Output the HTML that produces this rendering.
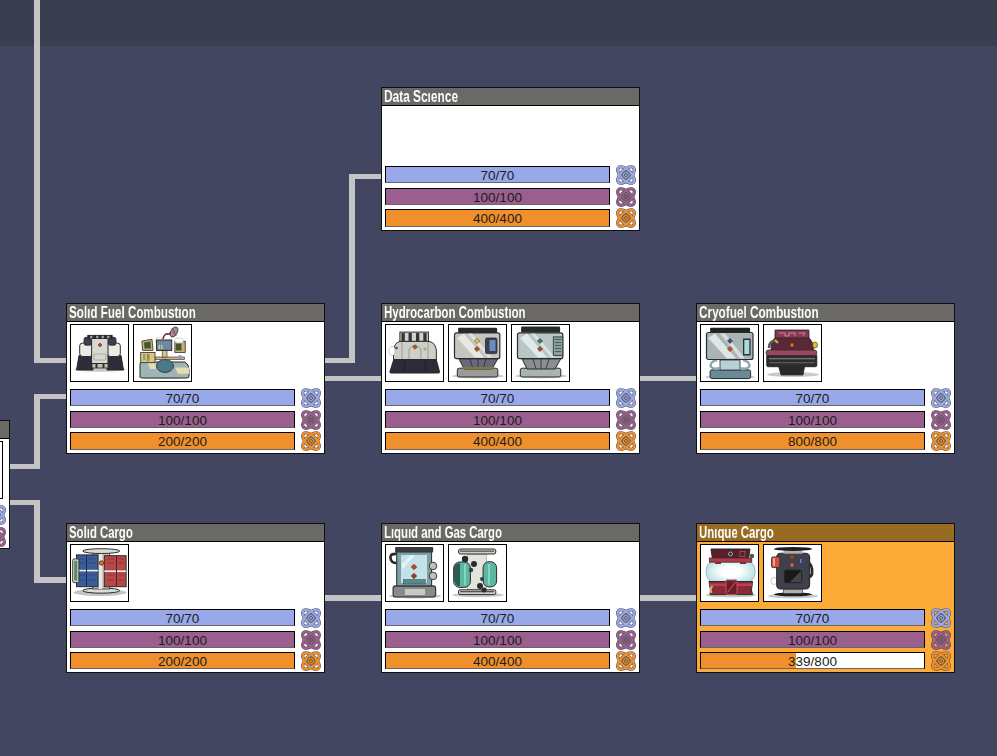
<!DOCTYPE html>
<html><head><meta charset="utf-8"><style>
*{box-sizing:border-box}
html,body{margin:0;padding:0;width:997px;height:756px;overflow:hidden;background:#424660;font-family:"Liberation Sans",sans-serif}
.topband{position:absolute;left:0;top:0;width:997px;height:46px;background:#3a3f50}
.ln{position:absolute;background:#c4c4c4}
.card{position:absolute;width:259px;background:#fff;border:1px solid #101010}
.card .hd{position:absolute;left:0;top:0;width:257px;height:18px;background:#6a6965;border-bottom:1px solid #000}
.card.uq{background:#fcaa38}
.card.uq .hd{background:#986b22}
.tt{position:absolute;left:2px;top:0px;height:17px;line-height:17px;font-size:17px;font-weight:bold;color:#fff;white-space:nowrap;transform-origin:0 0;will-change:transform}
.th{position:absolute;top:20px;width:59px;height:58px;border:1px solid #000;background:#fff;overflow:hidden}
.bar{position:absolute;left:3px;width:225px;height:17px;border:1px solid #000;border-bottom-color:#666;overflow:hidden}
.bar i{position:absolute;left:0;top:0;bottom:0}
.bar span{position:absolute;left:0;right:0;top:0;text-align:center;font-size:13.5px;line-height:17px;color:#1c1c1c}
.ic{position:absolute}
</style></head><body>
<div class="topband"></div>
<div class="ln" style="left:34px;top:0px;width:6px;height:363px"></div><div class="ln" style="left:34px;top:358px;width:33px;height:5px"></div><div class="ln" style="left:9px;top:464px;width:31px;height:5px"></div><div class="ln" style="left:34px;top:394px;width:6px;height:75px"></div><div class="ln" style="left:34px;top:394px;width:33px;height:5px"></div><div class="ln" style="left:9px;top:500px;width:31px;height:5px"></div><div class="ln" style="left:34px;top:500px;width:6px;height:83px"></div><div class="ln" style="left:34px;top:577px;width:33px;height:6px"></div><div class="ln" style="left:349px;top:174px;width:33px;height:5px"></div><div class="ln" style="left:349px;top:174px;width:6px;height:189px"></div><div class="ln" style="left:324px;top:358px;width:31px;height:5px"></div><div class="ln" style="left:324px;top:376px;width:58px;height:5px"></div><div class="ln" style="left:639px;top:376px;width:58px;height:5px"></div><div class="ln" style="left:324px;top:595px;width:58px;height:6px"></div><div class="ln" style="left:639px;top:595px;width:58px;height:6px"></div>
<div class="card" style="left:-249px;top:420px;height:129px"><div class="hd"></div><div class="tt" style="transform:scaleX(0.68)"></div><div class="th" style="left:3px"></div><div class="th" style="left:66px"></div><div class="th" style="left:129px"></div><div class="th" style="left:192px"></div><div class="bar" style="top:85px;height:17px;background:#98a8e8"><span>70/70</span></div><svg class="ic" style="left:234px;top:84px" width="20" height="20" viewBox="0.2 0.2 19.6 19.6">
<g fill="none" stroke="#474747" stroke-width="3.1"><ellipse cx="10" cy="10" rx="10.3" ry="5.0" transform="rotate(45 10 10)"/><ellipse cx="10" cy="10" rx="10.3" ry="5.0" transform="rotate(-45 10 10)"/></g>
<g fill="none" stroke="#98a8e8" stroke-width="2.15"><ellipse cx="10" cy="10" rx="10.3" ry="5.0" transform="rotate(45 10 10)"/><ellipse cx="10" cy="10" rx="10.3" ry="5.0" transform="rotate(-45 10 10)"/></g>
<circle cx="10" cy="10" r="3.5" fill="#98a8e8" stroke="#474747" stroke-width="0.75"/>
<circle cx="10" cy="10" r="1.5" fill="#98a8e8" stroke="#474747" stroke-width="0.75"/>
</svg><div class="bar" style="top:107px;height:17px;background:#9a5f8e"><span>100/100</span></div><svg class="ic" style="left:234px;top:106px" width="20" height="20" viewBox="0.2 0.2 19.6 19.6">
<g fill="none" stroke="#474747" stroke-width="3.1"><ellipse cx="10" cy="10" rx="10.3" ry="5.0" transform="rotate(45 10 10)"/><ellipse cx="10" cy="10" rx="10.3" ry="5.0" transform="rotate(-45 10 10)"/></g>
<g fill="none" stroke="#9a5f8e" stroke-width="2.15"><ellipse cx="10" cy="10" rx="10.3" ry="5.0" transform="rotate(45 10 10)"/><ellipse cx="10" cy="10" rx="10.3" ry="5.0" transform="rotate(-45 10 10)"/></g>
<circle cx="10" cy="10" r="3.5" fill="#9a5f8e" stroke="#474747" stroke-width="0.75"/>
<circle cx="10" cy="10" r="1.5" fill="#9a5f8e" stroke="#474747" stroke-width="0.75"/>
</svg></div><div class="card" style="left:381px;top:87px;height:144px"><div class="hd"></div><div class="tt" style="transform:scaleX(0.699)">Data Scıence</div><div class="bar" style="top:78px;height:17px;background:#98a8e8"><span>70/70</span></div><svg class="ic" style="left:234px;top:77px" width="20" height="20" viewBox="0.2 0.2 19.6 19.6">
<g fill="none" stroke="#474747" stroke-width="3.1"><ellipse cx="10" cy="10" rx="10.3" ry="5.0" transform="rotate(45 10 10)"/><ellipse cx="10" cy="10" rx="10.3" ry="5.0" transform="rotate(-45 10 10)"/></g>
<g fill="none" stroke="#98a8e8" stroke-width="2.15"><ellipse cx="10" cy="10" rx="10.3" ry="5.0" transform="rotate(45 10 10)"/><ellipse cx="10" cy="10" rx="10.3" ry="5.0" transform="rotate(-45 10 10)"/></g>
<circle cx="10" cy="10" r="3.5" fill="#98a8e8" stroke="#474747" stroke-width="0.75"/>
<circle cx="10" cy="10" r="1.5" fill="#98a8e8" stroke="#474747" stroke-width="0.75"/>
</svg><div class="bar" style="top:100px;height:17px;background:#9a5f8e"><span>100/100</span></div><svg class="ic" style="left:234px;top:99px" width="20" height="20" viewBox="0.2 0.2 19.6 19.6">
<g fill="none" stroke="#474747" stroke-width="3.1"><ellipse cx="10" cy="10" rx="10.3" ry="5.0" transform="rotate(45 10 10)"/><ellipse cx="10" cy="10" rx="10.3" ry="5.0" transform="rotate(-45 10 10)"/></g>
<g fill="none" stroke="#9a5f8e" stroke-width="2.15"><ellipse cx="10" cy="10" rx="10.3" ry="5.0" transform="rotate(45 10 10)"/><ellipse cx="10" cy="10" rx="10.3" ry="5.0" transform="rotate(-45 10 10)"/></g>
<circle cx="10" cy="10" r="3.5" fill="#9a5f8e" stroke="#474747" stroke-width="0.75"/>
<circle cx="10" cy="10" r="1.5" fill="#9a5f8e" stroke="#474747" stroke-width="0.75"/>
</svg><div class="bar" style="top:121px;height:18px;background:#f0902c"><span>400/400</span></div><svg class="ic" style="left:234px;top:120px" width="20" height="20" viewBox="0.2 0.2 19.6 19.6">
<g fill="none" stroke="#474747" stroke-width="3.1"><ellipse cx="10" cy="10" rx="10.3" ry="5.0" transform="rotate(45 10 10)"/><ellipse cx="10" cy="10" rx="10.3" ry="5.0" transform="rotate(-45 10 10)"/></g>
<g fill="none" stroke="#f0902c" stroke-width="2.15"><ellipse cx="10" cy="10" rx="10.3" ry="5.0" transform="rotate(45 10 10)"/><ellipse cx="10" cy="10" rx="10.3" ry="5.0" transform="rotate(-45 10 10)"/></g>
<circle cx="10" cy="10" r="3.5" fill="#f0902c" stroke="#474747" stroke-width="0.75"/>
<circle cx="10" cy="10" r="1.5" fill="#f0902c" stroke="#474747" stroke-width="0.75"/>
</svg></div><div class="card" style="left:66px;top:303px;height:151px"><div class="hd"></div><div class="tt" style="transform:scaleX(0.685)">Solıd Fuel Combustıon</div><div class="th" style="left:3px"><svg width="57" height="56" viewBox="1 1 57 56" style="position:absolute;left:0;top:0"><ellipse cx="30" cy="45.5" rx="26" ry="2.2" fill="#c9c9c9"/><path d="M9 31.5 L23 31.5 L23 46 L6.5 46 Z" fill="#2c2d3a" stroke="#2b2b2b" stroke-width="1"/><path d="M37 31.5 L51 31.5 L53.5 46 L37 46 Z" fill="#2c2d3a" stroke="#2b2b2b" stroke-width="1"/><rect x="22" y="38" width="16" height="6" fill="#bdbdb6" stroke="#2b2b2b" stroke-width="0.8"/><rect x="25.5" y="38" width="2" height="6" fill="#333"/><rect x="32.5" y="38" width="2" height="6" fill="#333"/><rect x="9.7" y="19" width="13" height="13.5" rx="3" fill="#ebebe6" stroke="#2b2b2b" stroke-width="1"/><rect x="37.3" y="19" width="13" height="13.5" rx="3" fill="#ebebe6" stroke="#2b2b2b" stroke-width="1"/><rect x="14" y="13.3" width="7.5" height="8" rx="2" fill="#3b3f50" stroke="#2b2b2b" stroke-width="0.8"/><rect x="38.5" y="13.3" width="7.5" height="8" rx="2" fill="#3b3f50" stroke="#2b2b2b" stroke-width="0.8"/><rect x="21.6" y="14.5" width="16.4" height="25" fill="#d9d7d1" stroke="#2b2b2b" stroke-width="1"/><rect x="24" y="30" width="12" height="6" rx="1" fill="none" stroke="#888" stroke-width="0.6"/><rect x="17.3" y="10.9" width="25.3" height="4" fill="#2a2a2a"/><rect x="20" y="11.8" width="2.5" height="2.4" fill="#9a9a94"/><rect x="26" y="11.8" width="2.5" height="2.4" fill="#9a9a94"/><rect x="31.5" y="11.8" width="2.5" height="2.4" fill="#9a9a94"/><rect x="37" y="11.8" width="2.5" height="2.4" fill="#9a9a94"/><path d="M30 19L32 21L30 23L28 21Z" fill="#c8401c" stroke="#3a2a20" stroke-width="0.5"/></svg></div><div class="th" style="left:66px"><svg width="57" height="56" viewBox="1 1 57 56" style="position:absolute;left:0;top:0"><ellipse cx="30" cy="53" rx="25" ry="2" fill="#c9c9c9"/><path d="M7 40 Q7 38 9 38 L52 38 Q56 40 56 46 L56 52 Q56 54 54 54 L9 54 Q7 54 7 52 Z" fill="#9fb5b5" stroke="#2b2b2b" stroke-width="1"/><path d="M14.5 38.7 L22.8 38.7 L22.8 45 L17 45 Z" fill="#e6dcb4"/><path d="M42 43.4 L56 43.4 L56 49.8 L45 49.8 Z" fill="#e6dcb4"/><ellipse cx="32" cy="42" rx="8.5" ry="6.5" fill="#4a7a88" stroke="#2b2b2b" stroke-width="0.8"/><rect x="22" y="33" width="29.4" height="2.5" fill="#cdb47a" stroke="#2b2b2b" stroke-width="0.6"/><rect x="7.7" y="28.4" width="14.3" height="10.3" fill="#d7c58a" stroke="#2b2b2b" stroke-width="0.8"/><rect x="10" y="30" width="2.5" height="6" fill="#8aaa60"/><rect x="14" y="30" width="2.5" height="6" fill="#c8704a"/><circle cx="15" cy="36" r="1.5" fill="#60c040"/><rect x="29.2" y="26.4" width="4.8" height="6.7" fill="#d9c38a" stroke="#2b2b2b" stroke-width="0.6"/><path d="M8.9 17 L19 15.3 L20 26.4 L9.5 26.4 Z" fill="#cdb070" stroke="#2b2b2b" stroke-width="0.8"/><path d="M11 18.5 L17.5 17.5 L18 24.5 L11.5 24.5 Z" fill="#3d5a2e"/><rect x="41.9" y="17.3" width="10.3" height="11.1" fill="#cdb070" stroke="#2b2b2b" stroke-width="0.8"/><rect x="43" y="19.5" width="5.5" height="7" fill="#3d5a2e"/><ellipse cx="26" cy="17" rx="4" ry="3.5" fill="#fff" stroke="#aaa" stroke-width="0.5"/><ellipse cx="46" cy="16.5" rx="4.5" ry="2.5" fill="#fff" stroke="#aaa" stroke-width="0.5"/><rect x="23.6" y="16" width="15.1" height="10.4" fill="#6f8aa0" stroke="#2b2b2b" stroke-width="1"/><rect x="25.5" y="21" width="1.5" height="4" fill="#d9c38a"/><rect x="28" y="21" width="1.5" height="4" fill="#d9c38a"/><path d="M30 15 Q31 9 36 10 Q38 8 40 8" fill="none" stroke="#7a2a30" stroke-width="1.6"/><ellipse cx="41" cy="8" rx="3.2" ry="5.5" transform="rotate(30 41 8)" fill="#8a96a4" stroke="#2b2b2b" stroke-width="0.8"/><path d="M39 4 L43 12" stroke="#b83a40" stroke-width="1.2"/><circle cx="47" cy="33" r="2" fill="#9a9ab0"/></svg></div><div class="bar" style="top:85px;height:17px;background:#98a8e8"><span>70/70</span></div><svg class="ic" style="left:234px;top:84px" width="20" height="20" viewBox="0.2 0.2 19.6 19.6">
<g fill="none" stroke="#474747" stroke-width="3.1"><ellipse cx="10" cy="10" rx="10.3" ry="5.0" transform="rotate(45 10 10)"/><ellipse cx="10" cy="10" rx="10.3" ry="5.0" transform="rotate(-45 10 10)"/></g>
<g fill="none" stroke="#98a8e8" stroke-width="2.15"><ellipse cx="10" cy="10" rx="10.3" ry="5.0" transform="rotate(45 10 10)"/><ellipse cx="10" cy="10" rx="10.3" ry="5.0" transform="rotate(-45 10 10)"/></g>
<circle cx="10" cy="10" r="3.5" fill="#98a8e8" stroke="#474747" stroke-width="0.75"/>
<circle cx="10" cy="10" r="1.5" fill="#98a8e8" stroke="#474747" stroke-width="0.75"/>
</svg><div class="bar" style="top:107px;height:17px;background:#9a5f8e"><span>100/100</span></div><svg class="ic" style="left:234px;top:106px" width="20" height="20" viewBox="0.2 0.2 19.6 19.6">
<g fill="none" stroke="#474747" stroke-width="3.1"><ellipse cx="10" cy="10" rx="10.3" ry="5.0" transform="rotate(45 10 10)"/><ellipse cx="10" cy="10" rx="10.3" ry="5.0" transform="rotate(-45 10 10)"/></g>
<g fill="none" stroke="#9a5f8e" stroke-width="2.15"><ellipse cx="10" cy="10" rx="10.3" ry="5.0" transform="rotate(45 10 10)"/><ellipse cx="10" cy="10" rx="10.3" ry="5.0" transform="rotate(-45 10 10)"/></g>
<circle cx="10" cy="10" r="3.5" fill="#9a5f8e" stroke="#474747" stroke-width="0.75"/>
<circle cx="10" cy="10" r="1.5" fill="#9a5f8e" stroke="#474747" stroke-width="0.75"/>
</svg><div class="bar" style="top:128px;height:18px;background:#f0902c"><span>200/200</span></div><svg class="ic" style="left:234px;top:127px" width="20" height="20" viewBox="0.2 0.2 19.6 19.6">
<g fill="none" stroke="#474747" stroke-width="3.1"><ellipse cx="10" cy="10" rx="10.3" ry="5.0" transform="rotate(45 10 10)"/><ellipse cx="10" cy="10" rx="10.3" ry="5.0" transform="rotate(-45 10 10)"/></g>
<g fill="none" stroke="#f0902c" stroke-width="2.15"><ellipse cx="10" cy="10" rx="10.3" ry="5.0" transform="rotate(45 10 10)"/><ellipse cx="10" cy="10" rx="10.3" ry="5.0" transform="rotate(-45 10 10)"/></g>
<circle cx="10" cy="10" r="3.5" fill="#f0902c" stroke="#474747" stroke-width="0.75"/>
<circle cx="10" cy="10" r="1.5" fill="#f0902c" stroke="#474747" stroke-width="0.75"/>
</svg></div><div class="card" style="left:381px;top:303px;height:151px"><div class="hd"></div><div class="tt" style="transform:scaleX(0.675)">Hydrocarbon Combustıon</div><div class="th" style="left:3px"><svg width="57" height="56" viewBox="1 1 57 56" style="position:absolute;left:0;top:0"><path d="M9 34.7 L51 34.7 L54.6 48 Q54.6 49 53 49 L6 49 Q4.6 49 4.8 48 Z" fill="#2b2c3a" stroke="#2b2b2b" stroke-width="1"/><path d="M20 35 L19 49 M40 35 L41 49" stroke="#1a1a22" stroke-width="0.7"/><path d="M8.5 35.5 L8.5 27 Q9 19 15 17.3 L44 17.3 Q51 19 51.4 27 L51.4 35.5 Z" fill="#cfcfc9" stroke="#2b2b2b" stroke-width="1"/><path d="M17 18 L17 35 M43 18 L43 35" stroke="#777" stroke-width="0.6"/><path d="M24 35 L24 25 Q30 18 36 25 L36 35" fill="none" stroke="#777" stroke-width="0.6"/><rect x="14.9" y="8.1" width="28.5" height="9.2" fill="#d0d0cc" stroke="#2b2b2b" stroke-width="1"/><rect x="16.5" y="9" width="3.3" height="8" fill="#353535"/><rect x="23.5" y="9" width="3.3" height="8" fill="#353535"/><rect x="31" y="9" width="3.3" height="8" fill="#353535"/><rect x="38.3" y="9" width="3.3" height="8" fill="#353535"/><path d="M30 20.7L32.3 23L30 25.3L27.7 23Z" fill="#c8501c" stroke="#3a2a20" stroke-width="0.5"/><ellipse cx="7" cy="27" rx="3" ry="4.5" fill="#fff" stroke="#999" stroke-width="0.5"/><circle cx="11.5" cy="24" r="1.3" fill="#4a4a3a"/><circle cx="40" cy="25" r="1.5" fill="#b8a050"/></svg></div><div class="th" style="left:66px"><svg width="57" height="56" viewBox="1 1 57 56" style="position:absolute;left:0;top:0"><ellipse cx="30" cy="52" rx="26" ry="2.2" fill="#c9c9c9"/><rect x="9.3" y="44.2" width="40.5" height="8.8" rx="2" fill="#9a9a98" stroke="#2b2b2b" stroke-width="1"/><path d="M11 34.7 L49.8 34.7 L44 45 L16 45 Z" fill="#6a6880" stroke="#2b2b2b" stroke-width="1"/><path d="M22 35 L25 45 M30 35 L30 45 M38 35 L35 45" stroke="#2a2a30" stroke-width="0.8"/><rect x="10.1" y="3.8" width="39" height="6" rx="1" fill="#2a2a2a"/><rect x="6.5" y="8.9" width="45.3" height="25.8" rx="2" fill="#c6c6c0" stroke="#2b2b2b" stroke-width="1.2"/><path d="M9 14 L16 9.5 L36 33.5 L27 33.5 Z" fill="#ececea" opacity="0.85"/><path d="M20 9.5 L24 9.5 L44 33.5 L40 33.5 Z" fill="#ececea" opacity="0.7"/><rect x="37.5" y="14" width="11.5" height="15.6" rx="1.5" fill="#3a4050" stroke="#2b2b2b" stroke-width="0.8"/><rect x="41.5" y="16" width="6" height="11" fill="#6a8ac0"/><rect x="15" y="43" width="30" height="2" fill="#8a7a30"/><path d="M29 14.4L31.6 17L29 19.6L26.4 17Z" fill="#e0c840" stroke="#3a2a20" stroke-width="0.5"/><path d="M29 22.4L31.6 25L29 27.6L26.4 25Z" fill="#b8481c" stroke="#3a2a20" stroke-width="0.5"/></svg></div><div class="th" style="left:129px"><svg width="57" height="56" viewBox="1 1 57 56" style="position:absolute;left:0;top:0"><ellipse cx="30" cy="52" rx="26" ry="2.2" fill="#c9c9c9"/><rect x="9.3" y="44.2" width="40.5" height="8.8" rx="2" fill="#a8b4b4" stroke="#2b2b2b" stroke-width="1"/><path d="M11 34.7 L49.8 34.7 L44 45 L16 45 Z" fill="#8a9090" stroke="#2b2b2b" stroke-width="1"/><path d="M22 35 L25 45 M30 35 L30 45 M38 35 L35 45" stroke="#2a2a30" stroke-width="0.8"/><rect x="10.1" y="2.6" width="39" height="6" rx="1" fill="#2a2a2a"/><rect x="6.5" y="8.9" width="45.3" height="25.8" rx="2" fill="#b8c6c6" stroke="#2b2b2b" stroke-width="1.2"/><path d="M9 14 L16 9.5 L36 33.5 L27 33.5 Z" fill="#e8f0f0" opacity="0.85"/><path d="M20 9.5 L24 9.5 L44 33.5 L40 33.5 Z" fill="#e8f0f0" opacity="0.7"/><rect x="42.3" y="12.9" width="9.5" height="18.6" fill="#8aa0a0" stroke="#2b2b2b" stroke-width="0.8"/><rect x="44" y="15" width="6" height="1" fill="#4a5a5a"/><rect x="44" y="18" width="6" height="1" fill="#4a5a5a"/><rect x="44" y="21" width="6" height="1" fill="#4a5a5a"/><rect x="44" y="24" width="6" height="1" fill="#4a5a5a"/><rect x="44" y="27" width="6" height="1" fill="#4a5a5a"/><path d="M29 14.4L31.6 17L29 19.6L26.4 17Z" fill="#2a7a8a" stroke="#3a2a20" stroke-width="0.5"/><path d="M29 22.4L31.6 25L29 27.6L26.4 25Z" fill="#b8481c" stroke="#3a2a20" stroke-width="0.5"/></svg></div><div class="bar" style="top:85px;height:17px;background:#98a8e8"><span>70/70</span></div><svg class="ic" style="left:234px;top:84px" width="20" height="20" viewBox="0.2 0.2 19.6 19.6">
<g fill="none" stroke="#474747" stroke-width="3.1"><ellipse cx="10" cy="10" rx="10.3" ry="5.0" transform="rotate(45 10 10)"/><ellipse cx="10" cy="10" rx="10.3" ry="5.0" transform="rotate(-45 10 10)"/></g>
<g fill="none" stroke="#98a8e8" stroke-width="2.15"><ellipse cx="10" cy="10" rx="10.3" ry="5.0" transform="rotate(45 10 10)"/><ellipse cx="10" cy="10" rx="10.3" ry="5.0" transform="rotate(-45 10 10)"/></g>
<circle cx="10" cy="10" r="3.5" fill="#98a8e8" stroke="#474747" stroke-width="0.75"/>
<circle cx="10" cy="10" r="1.5" fill="#98a8e8" stroke="#474747" stroke-width="0.75"/>
</svg><div class="bar" style="top:107px;height:17px;background:#9a5f8e"><span>100/100</span></div><svg class="ic" style="left:234px;top:106px" width="20" height="20" viewBox="0.2 0.2 19.6 19.6">
<g fill="none" stroke="#474747" stroke-width="3.1"><ellipse cx="10" cy="10" rx="10.3" ry="5.0" transform="rotate(45 10 10)"/><ellipse cx="10" cy="10" rx="10.3" ry="5.0" transform="rotate(-45 10 10)"/></g>
<g fill="none" stroke="#9a5f8e" stroke-width="2.15"><ellipse cx="10" cy="10" rx="10.3" ry="5.0" transform="rotate(45 10 10)"/><ellipse cx="10" cy="10" rx="10.3" ry="5.0" transform="rotate(-45 10 10)"/></g>
<circle cx="10" cy="10" r="3.5" fill="#9a5f8e" stroke="#474747" stroke-width="0.75"/>
<circle cx="10" cy="10" r="1.5" fill="#9a5f8e" stroke="#474747" stroke-width="0.75"/>
</svg><div class="bar" style="top:128px;height:18px;background:#f0902c"><span>400/400</span></div><svg class="ic" style="left:234px;top:127px" width="20" height="20" viewBox="0.2 0.2 19.6 19.6">
<g fill="none" stroke="#474747" stroke-width="3.1"><ellipse cx="10" cy="10" rx="10.3" ry="5.0" transform="rotate(45 10 10)"/><ellipse cx="10" cy="10" rx="10.3" ry="5.0" transform="rotate(-45 10 10)"/></g>
<g fill="none" stroke="#f0902c" stroke-width="2.15"><ellipse cx="10" cy="10" rx="10.3" ry="5.0" transform="rotate(45 10 10)"/><ellipse cx="10" cy="10" rx="10.3" ry="5.0" transform="rotate(-45 10 10)"/></g>
<circle cx="10" cy="10" r="3.5" fill="#f0902c" stroke="#474747" stroke-width="0.75"/>
<circle cx="10" cy="10" r="1.5" fill="#f0902c" stroke="#474747" stroke-width="0.75"/>
</svg></div><div class="card" style="left:696px;top:303px;height:151px"><div class="hd"></div><div class="tt" style="transform:scaleX(0.692)">Cryofuel Combustıon</div><div class="th" style="left:3px"><svg width="57" height="56" viewBox="1 1 57 56" style="position:absolute;left:0;top:0"><ellipse cx="30" cy="53" rx="25" ry="2" fill="#c9c9c9"/><rect x="10.1" y="45.8" width="40.5" height="8.8" rx="2" fill="#6a8a98" stroke="#2b2b2b" stroke-width="1"/><rect x="20" y="36" width="20" height="10" fill="#b8d0d8" stroke="#2b2b2b" stroke-width="0.8"/><path d="M17 36 Q9 38 11 43 Q14 46 20 44" fill="none" stroke="#90a8b0" stroke-width="2.4"/><path d="M43 36 Q51 38 49 43 Q46 46 40 44" fill="none" stroke="#90a8b0" stroke-width="2.4"/><rect x="10.1" y="3.8" width="40" height="5.5" rx="1" fill="#222"/><rect x="6.5" y="8.5" width="46.5" height="27" rx="2" fill="#a9b5b5" stroke="#2b2b2b" stroke-width="1.2"/><path d="M8 14 L15 9.5 L36 34.5 L27 34.5 Z" fill="#e8eeee" opacity="0.85"/><path d="M20 9.5 L25 9.5 L45 34.5 L40 34.5 Z" fill="#e8eeee" opacity="0.7"/><rect x="43" y="14.5" width="7.6" height="17" fill="#2a3030"/><rect x="44.3" y="16" width="5" height="14" fill="#a8d8e0"/><path d="M30 14.4L32.6 17L30 19.6L27.4 17Z" fill="#2a5a7a" stroke="#3a2a20" stroke-width="0.5"/><path d="M30 22.4L32.6 25L30 27.6L27.4 25Z" fill="#d0501c" stroke="#3a2a20" stroke-width="0.5"/></svg></div><div class="th" style="left:66px"><svg width="57" height="56" viewBox="1 1 57 56" style="position:absolute;left:0;top:0"><ellipse cx="30" cy="50.5" rx="26" ry="2.5" fill="#c9c9c9"/><path d="M15 40.3 L42 40.3 L40 51 L18 51 Z" fill="#2a2a2a" stroke="#2b2b2b" stroke-width="0.8"/><rect x="3.8" y="30.7" width="50" height="12" rx="1.5" fill="#2e2c30" stroke="#2b2b2b" stroke-width="1"/><rect x="6" y="34" width="46" height="1.3" fill="#777"/><rect x="6" y="38" width="46" height="1.3" fill="#5a5a5a"/><path d="M12.1 6.1 L45.8 6.1 L46 14.9 L12 14.9 Z" fill="#8a3850" stroke="#2b2b2b" stroke-width="1"/><path d="M16 9 L22 9 L22 12 L26 12 L26 9 L32 9 L32 12 M36 9 L42 9 L40 12" fill="none" stroke="#e0a0b4" stroke-width="0.8"/><path d="M8 27.6 Q8 15 13 14 L45 14 Q50 15 50.6 27.6 Z" fill="#5a2838" stroke="#2b2b2b" stroke-width="1"/><rect x="3" y="26" width="50.8" height="5.5" rx="2.5" fill="#9a4860" stroke="#2b2b2b" stroke-width="0.8"/><circle cx="29" cy="21" r="2.2" fill="#e06a20" stroke="#3a1a10" stroke-width="0.6"/><path d="M14 17 Q6 16 6 24" fill="none" stroke="#555560" stroke-width="2.6"/><path d="M12 16 L15 19" stroke="#e0b020" stroke-width="2"/><ellipse cx="52" cy="21" rx="2.5" ry="3" fill="#e8c020" stroke="#2b2b2b" stroke-width="0.6"/></svg></div><div class="bar" style="top:85px;height:17px;background:#98a8e8"><span>70/70</span></div><svg class="ic" style="left:234px;top:84px" width="20" height="20" viewBox="0.2 0.2 19.6 19.6">
<g fill="none" stroke="#474747" stroke-width="3.1"><ellipse cx="10" cy="10" rx="10.3" ry="5.0" transform="rotate(45 10 10)"/><ellipse cx="10" cy="10" rx="10.3" ry="5.0" transform="rotate(-45 10 10)"/></g>
<g fill="none" stroke="#98a8e8" stroke-width="2.15"><ellipse cx="10" cy="10" rx="10.3" ry="5.0" transform="rotate(45 10 10)"/><ellipse cx="10" cy="10" rx="10.3" ry="5.0" transform="rotate(-45 10 10)"/></g>
<circle cx="10" cy="10" r="3.5" fill="#98a8e8" stroke="#474747" stroke-width="0.75"/>
<circle cx="10" cy="10" r="1.5" fill="#98a8e8" stroke="#474747" stroke-width="0.75"/>
</svg><div class="bar" style="top:107px;height:17px;background:#9a5f8e"><span>100/100</span></div><svg class="ic" style="left:234px;top:106px" width="20" height="20" viewBox="0.2 0.2 19.6 19.6">
<g fill="none" stroke="#474747" stroke-width="3.1"><ellipse cx="10" cy="10" rx="10.3" ry="5.0" transform="rotate(45 10 10)"/><ellipse cx="10" cy="10" rx="10.3" ry="5.0" transform="rotate(-45 10 10)"/></g>
<g fill="none" stroke="#9a5f8e" stroke-width="2.15"><ellipse cx="10" cy="10" rx="10.3" ry="5.0" transform="rotate(45 10 10)"/><ellipse cx="10" cy="10" rx="10.3" ry="5.0" transform="rotate(-45 10 10)"/></g>
<circle cx="10" cy="10" r="3.5" fill="#9a5f8e" stroke="#474747" stroke-width="0.75"/>
<circle cx="10" cy="10" r="1.5" fill="#9a5f8e" stroke="#474747" stroke-width="0.75"/>
</svg><div class="bar" style="top:128px;height:18px;background:#f0902c"><span>800/800</span></div><svg class="ic" style="left:234px;top:127px" width="20" height="20" viewBox="0.2 0.2 19.6 19.6">
<g fill="none" stroke="#474747" stroke-width="3.1"><ellipse cx="10" cy="10" rx="10.3" ry="5.0" transform="rotate(45 10 10)"/><ellipse cx="10" cy="10" rx="10.3" ry="5.0" transform="rotate(-45 10 10)"/></g>
<g fill="none" stroke="#f0902c" stroke-width="2.15"><ellipse cx="10" cy="10" rx="10.3" ry="5.0" transform="rotate(45 10 10)"/><ellipse cx="10" cy="10" rx="10.3" ry="5.0" transform="rotate(-45 10 10)"/></g>
<circle cx="10" cy="10" r="3.5" fill="#f0902c" stroke="#474747" stroke-width="0.75"/>
<circle cx="10" cy="10" r="1.5" fill="#f0902c" stroke="#474747" stroke-width="0.75"/>
</svg></div><div class="card" style="left:66px;top:523px;height:150px"><div class="hd"></div><div class="tt" style="transform:scaleX(0.669)">Solıd Cargo</div><div class="th" style="left:3px"><svg width="57" height="56" viewBox="1 1 57 56" style="position:absolute;left:0;top:0"><ellipse cx="30" cy="48.5" rx="26.5" ry="3.5" fill="#c4c4c4"/><ellipse cx="31.3" cy="46.6" rx="18.5" ry="2.6" fill="#dcdcd6" stroke="#2b2b2b" stroke-width="1"/><rect x="22.8" y="8.5" width="16.7" height="36.5" fill="#c8c8c0" stroke="#2b2b2b" stroke-width="0.8"/><rect x="29" y="8.5" width="3" height="36.5" fill="#e8e8e2"/><ellipse cx="31.3" cy="7.1" rx="18.5" ry="2.4" fill="#dcdcd6" stroke="#2b2b2b" stroke-width="1"/><rect x="6.5" y="10.9" width="21.5" height="31.8" fill="#3a5c98" stroke="#2b2b2b" stroke-width="1"/><path d="M6.5 26.6 L28 26.6" stroke="#f0f0f0" stroke-width="1.6"/><path d="M16.5 11 L16.5 42.7" stroke="#1e2a48" stroke-width="1"/><path d="M9 15 L15 15 M9 19 L15 19 M18 15 L26 15 M18 19 L26 19 M9 31 L15 31 M18 31 L26 31 M9 36 L15 36 M18 36 L26 36" stroke="#2a406a" stroke-width="0.6"/><rect x="34.3" y="11.7" width="21.8" height="31" fill="#b84848" stroke="#2b2b2b" stroke-width="1"/><path d="M34.3 27.2 L56 27.2" stroke="#f0f0f0" stroke-width="1.6"/><path d="M46.5 11.7 L46.5 42.7" stroke="#5a1e1e" stroke-width="1"/><path d="M37 15 L44 15 M37 19 L44 19 M48 15 L54 15 M48 19 L54 19 M37 31 L44 31 M48 31 L54 31 M37 36 L44 36 M48 36 L54 36" stroke="#7a2a2a" stroke-width="0.6"/><rect x="2.6" y="14.9" width="6.3" height="23.8" rx="1.5" fill="#d8c890" stroke="#2b2b2b" stroke-width="0.8"/><rect x="4.2" y="17" width="3" height="19.5" fill="#4a8a8a"/><circle cx="31.5" cy="19" r="2.2" fill="#e07020" stroke="#3a2010" stroke-width="0.7"/></svg></div><div class="bar" style="top:85px;height:17px;background:#98a8e8"><span>70/70</span></div><svg class="ic" style="left:234px;top:84px" width="20" height="20" viewBox="0.2 0.2 19.6 19.6">
<g fill="none" stroke="#474747" stroke-width="3.1"><ellipse cx="10" cy="10" rx="10.3" ry="5.0" transform="rotate(45 10 10)"/><ellipse cx="10" cy="10" rx="10.3" ry="5.0" transform="rotate(-45 10 10)"/></g>
<g fill="none" stroke="#98a8e8" stroke-width="2.15"><ellipse cx="10" cy="10" rx="10.3" ry="5.0" transform="rotate(45 10 10)"/><ellipse cx="10" cy="10" rx="10.3" ry="5.0" transform="rotate(-45 10 10)"/></g>
<circle cx="10" cy="10" r="3.5" fill="#98a8e8" stroke="#474747" stroke-width="0.75"/>
<circle cx="10" cy="10" r="1.5" fill="#98a8e8" stroke="#474747" stroke-width="0.75"/>
</svg><div class="bar" style="top:107px;height:17px;background:#9a5f8e"><span>100/100</span></div><svg class="ic" style="left:234px;top:106px" width="20" height="20" viewBox="0.2 0.2 19.6 19.6">
<g fill="none" stroke="#474747" stroke-width="3.1"><ellipse cx="10" cy="10" rx="10.3" ry="5.0" transform="rotate(45 10 10)"/><ellipse cx="10" cy="10" rx="10.3" ry="5.0" transform="rotate(-45 10 10)"/></g>
<g fill="none" stroke="#9a5f8e" stroke-width="2.15"><ellipse cx="10" cy="10" rx="10.3" ry="5.0" transform="rotate(45 10 10)"/><ellipse cx="10" cy="10" rx="10.3" ry="5.0" transform="rotate(-45 10 10)"/></g>
<circle cx="10" cy="10" r="3.5" fill="#9a5f8e" stroke="#474747" stroke-width="0.75"/>
<circle cx="10" cy="10" r="1.5" fill="#9a5f8e" stroke="#474747" stroke-width="0.75"/>
</svg><div class="bar" style="top:128px;height:17px;background:#f0902c"><span>200/200</span></div><svg class="ic" style="left:234px;top:127px" width="20" height="20" viewBox="0.2 0.2 19.6 19.6">
<g fill="none" stroke="#474747" stroke-width="3.1"><ellipse cx="10" cy="10" rx="10.3" ry="5.0" transform="rotate(45 10 10)"/><ellipse cx="10" cy="10" rx="10.3" ry="5.0" transform="rotate(-45 10 10)"/></g>
<g fill="none" stroke="#f0902c" stroke-width="2.15"><ellipse cx="10" cy="10" rx="10.3" ry="5.0" transform="rotate(45 10 10)"/><ellipse cx="10" cy="10" rx="10.3" ry="5.0" transform="rotate(-45 10 10)"/></g>
<circle cx="10" cy="10" r="3.5" fill="#f0902c" stroke="#474747" stroke-width="0.75"/>
<circle cx="10" cy="10" r="1.5" fill="#f0902c" stroke="#474747" stroke-width="0.75"/>
</svg></div><div class="card" style="left:381px;top:523px;height:150px"><div class="hd"></div><div class="tt" style="transform:scaleX(0.668)">Lıquıd and Gas Cargo</div><div class="th" style="left:3px"><svg width="57" height="56" viewBox="1 1 57 56" style="position:absolute;left:0;top:0"><ellipse cx="30" cy="52" rx="26" ry="2.5" fill="#c9c9c9"/><rect x="8.1" y="41.9" width="42.5" height="11.1" rx="2.5" fill="#8a8a88" stroke="#2b2b2b" stroke-width="1.1"/><rect x="20" y="45" width="20" height="6" fill="#c8c8c4"/><path d="M12.5 10 Q5 9 5.5 14 Q6 19.6 12.5 19" fill="none" stroke="#2a2a2a" stroke-width="2.6"/><rect x="11.7" y="7.7" width="34.9" height="34.2" fill="#7aa0a8" stroke="#2b2b2b" stroke-width="1"/><rect x="16" y="11" width="26" height="28" fill="#c2e2e8"/><path d="M17 20 L26 11 L30 11 L17 26 Z" fill="#e4f4f6"/><rect x="18.3" y="35.5" width="22" height="4.5" fill="#5a8890" stroke="#2a4a50" stroke-width="0.5"/><rect x="10.1" y="3" width="38.1" height="5.5" rx="1" fill="#3a3a3a"/><circle cx="48" cy="22" r="3.8" fill="#c0c0b8" stroke="#2b2b2b" stroke-width="0.9"/><circle cx="48" cy="32" r="3.8" fill="#c0c0b8" stroke="#2b2b2b" stroke-width="0.9"/><path d="M29 20.2L31.8 23L29 25.8L26.2 23Z" fill="#b8481c" stroke="#3a2a20" stroke-width="0.5"/><path d="M29 29.2L31.8 32L29 34.8L26.2 32Z" fill="#a83818" stroke="#3a2a20" stroke-width="0.5"/></svg></div><div class="th" style="left:66px"><svg width="57" height="56" viewBox="1 1 57 56" style="position:absolute;left:0;top:0"><ellipse cx="30" cy="51" rx="26" ry="2.2" fill="#c9c9c9"/><rect x="19.6" y="10.1" width="19" height="35.7" fill="#e4e4dc" stroke="#999" stroke-width="0.6"/><rect x="10.5" y="45.8" width="37.3" height="4.8" rx="1.5" fill="#d0d0c8" stroke="#2b2b2b" stroke-width="1"/><rect x="10.5" y="5" width="37.3" height="5" rx="2" fill="#d0d0c8" stroke="#2b2b2b" stroke-width="1"/><rect x="12" y="6.5" width="34" height="1.3" fill="#555"/><rect x="12" y="47" width="34" height="1.3" fill="#555"/><rect x="5.7" y="18" width="16.7" height="25.4" rx="6" fill="#5ab8a0" stroke="#2b2b2b" stroke-width="1"/><path d="M8 20 Q5.7 22 5.7 30 Q5.7 40 10 42 L12 42 L12 19 Z" fill="#2a5a50"/><rect x="16" y="20" width="2" height="21" fill="#9ae0d0" opacity="0.7"/><rect x="35.1" y="17.7" width="13.5" height="25.3" rx="6" fill="#5ab8a0" stroke="#2b2b2b" stroke-width="1"/><rect x="40" y="20" width="2" height="21" fill="#9ae0d0" opacity="0.7"/><circle cx="17" cy="15" r="3.2" fill="#2a2a30"/><circle cx="26" cy="20" r="3" fill="#2a2a30"/><circle cx="23" cy="26" r="2.2" fill="#3a3a40"/><circle cx="32" cy="42" r="3" fill="#2a2a30"/><circle cx="36" cy="46" r="2.5" fill="#2a2a30"/><circle cx="34" cy="35" r="2" fill="#3a3a40"/></svg></div><div class="bar" style="top:85px;height:17px;background:#98a8e8"><span>70/70</span></div><svg class="ic" style="left:234px;top:84px" width="20" height="20" viewBox="0.2 0.2 19.6 19.6">
<g fill="none" stroke="#474747" stroke-width="3.1"><ellipse cx="10" cy="10" rx="10.3" ry="5.0" transform="rotate(45 10 10)"/><ellipse cx="10" cy="10" rx="10.3" ry="5.0" transform="rotate(-45 10 10)"/></g>
<g fill="none" stroke="#98a8e8" stroke-width="2.15"><ellipse cx="10" cy="10" rx="10.3" ry="5.0" transform="rotate(45 10 10)"/><ellipse cx="10" cy="10" rx="10.3" ry="5.0" transform="rotate(-45 10 10)"/></g>
<circle cx="10" cy="10" r="3.5" fill="#98a8e8" stroke="#474747" stroke-width="0.75"/>
<circle cx="10" cy="10" r="1.5" fill="#98a8e8" stroke="#474747" stroke-width="0.75"/>
</svg><div class="bar" style="top:107px;height:17px;background:#9a5f8e"><span>100/100</span></div><svg class="ic" style="left:234px;top:106px" width="20" height="20" viewBox="0.2 0.2 19.6 19.6">
<g fill="none" stroke="#474747" stroke-width="3.1"><ellipse cx="10" cy="10" rx="10.3" ry="5.0" transform="rotate(45 10 10)"/><ellipse cx="10" cy="10" rx="10.3" ry="5.0" transform="rotate(-45 10 10)"/></g>
<g fill="none" stroke="#9a5f8e" stroke-width="2.15"><ellipse cx="10" cy="10" rx="10.3" ry="5.0" transform="rotate(45 10 10)"/><ellipse cx="10" cy="10" rx="10.3" ry="5.0" transform="rotate(-45 10 10)"/></g>
<circle cx="10" cy="10" r="3.5" fill="#9a5f8e" stroke="#474747" stroke-width="0.75"/>
<circle cx="10" cy="10" r="1.5" fill="#9a5f8e" stroke="#474747" stroke-width="0.75"/>
</svg><div class="bar" style="top:128px;height:17px;background:#f0902c"><span>400/400</span></div><svg class="ic" style="left:234px;top:127px" width="20" height="20" viewBox="0.2 0.2 19.6 19.6">
<g fill="none" stroke="#474747" stroke-width="3.1"><ellipse cx="10" cy="10" rx="10.3" ry="5.0" transform="rotate(45 10 10)"/><ellipse cx="10" cy="10" rx="10.3" ry="5.0" transform="rotate(-45 10 10)"/></g>
<g fill="none" stroke="#f0902c" stroke-width="2.15"><ellipse cx="10" cy="10" rx="10.3" ry="5.0" transform="rotate(45 10 10)"/><ellipse cx="10" cy="10" rx="10.3" ry="5.0" transform="rotate(-45 10 10)"/></g>
<circle cx="10" cy="10" r="3.5" fill="#f0902c" stroke="#474747" stroke-width="0.75"/>
<circle cx="10" cy="10" r="1.5" fill="#f0902c" stroke="#474747" stroke-width="0.75"/>
</svg></div><div class="card uq" style="left:696px;top:523px;height:150px"><div class="hd"></div><div class="tt" style="transform:scaleX(0.671)">Unıque Cargo</div><div class="th" style="left:3px"><svg width="57" height="56" viewBox="1 1 57 56" style="position:absolute;left:0;top:0"><ellipse cx="31" cy="51" rx="25" ry="2.3" fill="#c8c8c8"/><defs><radialGradient id="gl1" cx="0.5" cy="0.5" r="0.5"><stop offset="0.4" stop-color="#ffffff"/><stop offset="1" stop-color="#bfe4e8"/></radialGradient></defs><rect x="6.1" y="15.5" width="49" height="24" rx="11" fill="url(#gl1)" stroke="#8ab0b4" stroke-width="0.8"/><path d="M9 37.5 L52.5 37.5 L51.5 46 L52.5 50.6 L10 50.6 L10.5 46 Z" fill="#8a2a38" stroke="#2b2b2b" stroke-width="1"/><rect x="9.5" y="39.5" width="43" height="2.5" fill="#b84050"/><rect x="26" y="36" width="11" height="14.5" rx="1" fill="#6a1e2a" stroke="#c05060" stroke-width="1"/><path d="M27.5 48.5 L35.5 38" stroke="#c05060" stroke-width="1.1"/><path d="M12.5 42 Q9.5 45 11.5 49" stroke="#d8b060" stroke-width="2" fill="none"/><path d="M11 5 L50 5 L48.5 15 L12.5 15 Z" fill="#5a1e28" stroke="#2b2b2b" stroke-width="1"/><rect x="9.3" y="14" width="42.5" height="4.2" fill="#b03a48" stroke="#2b2b2b" stroke-width="0.7"/><rect x="15" y="18" width="6" height="2" fill="#8a2a38"/><rect x="40" y="18" width="6" height="2" fill="#8a2a38"/><circle cx="30.5" cy="10" r="2" fill="none" stroke="#6ac0c8" stroke-width="1"/><rect x="40" y="7.5" width="5" height="5" fill="none" stroke="#9a6a70" stroke-width="0.7"/><circle cx="52" cy="12" r="2.3" fill="#555"/></svg></div><div class="th" style="left:66px"><svg width="57" height="56" viewBox="1 1 57 56" style="position:absolute;left:0;top:0"><ellipse cx="30" cy="52" rx="25" ry="2.3" fill="#c8c8c8"/><ellipse cx="30" cy="50.3" rx="19" ry="2" fill="#1e1e22"/><rect x="20.4" y="45" width="19" height="4.5" fill="#b0b0a8" stroke="#2b2b2b" stroke-width="0.6"/><path d="M44 18 Q50 20 49 30 Q48 33 45 33" fill="none" stroke="#2a2a2a" stroke-width="2.8"/><ellipse cx="11" cy="37" rx="3" ry="3.5" fill="#fff" stroke="#999" stroke-width="0.5"/><rect x="13.7" y="9.3" width="32.9" height="35.7" rx="4" fill="#3e4050" stroke="#2b2b2b" stroke-width="1.1"/><rect x="21.2" y="26" width="17.5" height="12.7" rx="2" fill="#1a1a1a" stroke="#2a2a2a" stroke-width="0.8"/><path d="M27 38 L38 27 L38 38 Z" fill="#444"/><rect x="8.5" y="12.9" width="8.4" height="10.7" rx="1.5" fill="#d05040" stroke="#2b2b2b" stroke-width="0.8"/><rect x="10" y="14" width="2" height="8" fill="#f0a090"/><rect x="20.4" y="6.5" width="19.1" height="3.2" fill="#b0b0a8"/><ellipse cx="30" cy="4.9" rx="19" ry="2" fill="#1e1e22"/><path d="M29 10.5L31.5 13L29 15.5L26.5 13Z" fill="#c03828" stroke="#3a2a20" stroke-width="0.5"/><path d="M29 18.5L31.5 21L29 23.5L26.5 21Z" fill="#e06a20" stroke="#3a2a20" stroke-width="0.5"/><rect x="37" y="15" width="1.5" height="4" fill="#5a8ad0"/></svg></div><div class="bar" style="top:85px;height:17px;background:#98a8e8"><span>70/70</span></div><svg class="ic" style="left:234px;top:84px" width="20" height="20" viewBox="0.2 0.2 19.6 19.6">
<g fill="none" stroke="#474747" stroke-width="3.1"><ellipse cx="10" cy="10" rx="10.3" ry="5.0" transform="rotate(45 10 10)"/><ellipse cx="10" cy="10" rx="10.3" ry="5.0" transform="rotate(-45 10 10)"/></g>
<g fill="none" stroke="#98a8e8" stroke-width="2.15"><ellipse cx="10" cy="10" rx="10.3" ry="5.0" transform="rotate(45 10 10)"/><ellipse cx="10" cy="10" rx="10.3" ry="5.0" transform="rotate(-45 10 10)"/></g>
<circle cx="10" cy="10" r="3.5" fill="#98a8e8" stroke="#474747" stroke-width="0.75"/>
<circle cx="10" cy="10" r="1.5" fill="#98a8e8" stroke="#474747" stroke-width="0.75"/>
</svg><div class="bar" style="top:107px;height:17px;background:#9a5f8e"><span>100/100</span></div><svg class="ic" style="left:234px;top:106px" width="20" height="20" viewBox="0.2 0.2 19.6 19.6">
<g fill="none" stroke="#474747" stroke-width="3.1"><ellipse cx="10" cy="10" rx="10.3" ry="5.0" transform="rotate(45 10 10)"/><ellipse cx="10" cy="10" rx="10.3" ry="5.0" transform="rotate(-45 10 10)"/></g>
<g fill="none" stroke="#9a5f8e" stroke-width="2.15"><ellipse cx="10" cy="10" rx="10.3" ry="5.0" transform="rotate(45 10 10)"/><ellipse cx="10" cy="10" rx="10.3" ry="5.0" transform="rotate(-45 10 10)"/></g>
<circle cx="10" cy="10" r="3.5" fill="#9a5f8e" stroke="#474747" stroke-width="0.75"/>
<circle cx="10" cy="10" r="1.5" fill="#9a5f8e" stroke="#474747" stroke-width="0.75"/>
</svg><div class="bar" style="top:128px;height:17px;background:#fff"><i style="width:42.4%;background:#f0902c"></i><span>339/800</span></div><svg class="ic" style="left:234px;top:127px" width="20" height="20" viewBox="0.2 0.2 19.6 19.6">
<g fill="none" stroke="#474747" stroke-width="3.1"><ellipse cx="10" cy="10" rx="10.3" ry="5.0" transform="rotate(45 10 10)"/><ellipse cx="10" cy="10" rx="10.3" ry="5.0" transform="rotate(-45 10 10)"/></g>
<g fill="none" stroke="#f0902c" stroke-width="2.15"><ellipse cx="10" cy="10" rx="10.3" ry="5.0" transform="rotate(45 10 10)"/><ellipse cx="10" cy="10" rx="10.3" ry="5.0" transform="rotate(-45 10 10)"/></g>
<circle cx="10" cy="10" r="3.5" fill="#f0902c" stroke="#474747" stroke-width="0.75"/>
<circle cx="10" cy="10" r="1.5" fill="#f0902c" stroke="#474747" stroke-width="0.75"/>
</svg></div>
</body></html>
